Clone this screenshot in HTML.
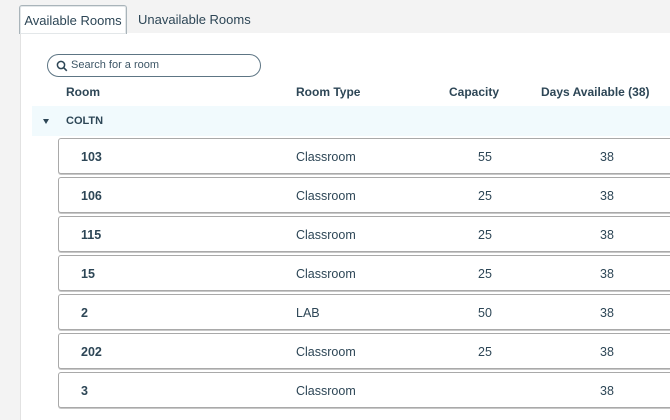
<!DOCTYPE html>
<html><head><style>
html,body{margin:0;width:670px;height:420px;overflow:hidden}
body{background:#f3f3f3;font-family:"Liberation Sans",sans-serif;color:#2d4656;position:relative}
.tab{position:absolute;top:5px;height:28px;font-size:13px;line-height:29px}
.t1{left:19px;width:106px;border:1px solid #a9b4ba;border-bottom:none;border-radius:3px 3px 0 0;background:#fff;text-align:center;box-shadow:inset 0 0 0 1px #e3e7e9;z-index:2}
.t2{left:138px}
.panel{position:absolute;left:20px;top:33px;width:660px;height:400px;background:#fff;border-left:1px solid #e2e2e2}
.search{position:absolute;left:47px;top:54px;width:212px;height:21px;border:1px solid #5d7584;border-radius:12px;font-size:11px;line-height:21px}
.search span{position:absolute;left:23px;color:#3d5666}
.hdr{position:absolute;top:85px;font-size:12px;font-weight:bold}
.grp{position:absolute;left:32px;top:106px;width:640px;height:30px;background:#f1fafd}
.grp b{position:absolute;left:34px;top:9px;font-size:11px}
.grp i{position:absolute;left:11px;top:13px;width:0;height:0;border-left:3.5px solid transparent;border-right:3.5px solid transparent;border-top:5px solid #2d4656}
.row{position:absolute;left:58px;width:620px;height:34px;border:1px solid #a9a9a9;border-radius:3px;background:#fff;box-shadow:0 1px 0 #c8c8c8;font-size:12.5px}
.row span{position:absolute;top:11px}
.n{left:22px;font-weight:bold}.ty{left:237px}.c{left:419px}.d{left:541px}
</style></head><body>
<div class="tab t1">Available Rooms</div><div class="tab t2">Unavailable Rooms</div>
<div class="panel"></div>
<div class="search"><svg style="position:absolute;left:8px;top:5px" width="12" height="12" viewBox="0 0 12 12"><circle cx="5" cy="5" r="3.6" fill="none" stroke="#2d4656" stroke-width="1.5"/><path d="M7.7 7.7L10.8 10.8" stroke="#2d4656" stroke-width="1.6"/></svg><span>Search for a room</span></div>
<div class="hdr" style="left:66px">Room</div>
<div class="hdr" style="left:296px">Room Type</div>
<div class="hdr" style="left:449px">Capacity</div>
<div class="hdr" style="left:541px">Days Available (38)</div>
<div class="grp"><i></i><b>COLTN</b></div>
<div class="row" style="top:138px"><span class="n">103</span><span class="ty">Classroom</span><span class="c">55</span><span class="d">38</span></div>
<div class="row" style="top:177px"><span class="n">106</span><span class="ty">Classroom</span><span class="c">25</span><span class="d">38</span></div>
<div class="row" style="top:216px"><span class="n">115</span><span class="ty">Classroom</span><span class="c">25</span><span class="d">38</span></div>
<div class="row" style="top:255px"><span class="n">15</span><span class="ty">Classroom</span><span class="c">25</span><span class="d">38</span></div>
<div class="row" style="top:294px"><span class="n">2</span><span class="ty">LAB</span><span class="c">50</span><span class="d">38</span></div>
<div class="row" style="top:333px"><span class="n">202</span><span class="ty">Classroom</span><span class="c">25</span><span class="d">38</span></div>
<div class="row" style="top:372px"><span class="n">3</span><span class="ty">Classroom</span><span class="d">38</span></div>
</body></html>
